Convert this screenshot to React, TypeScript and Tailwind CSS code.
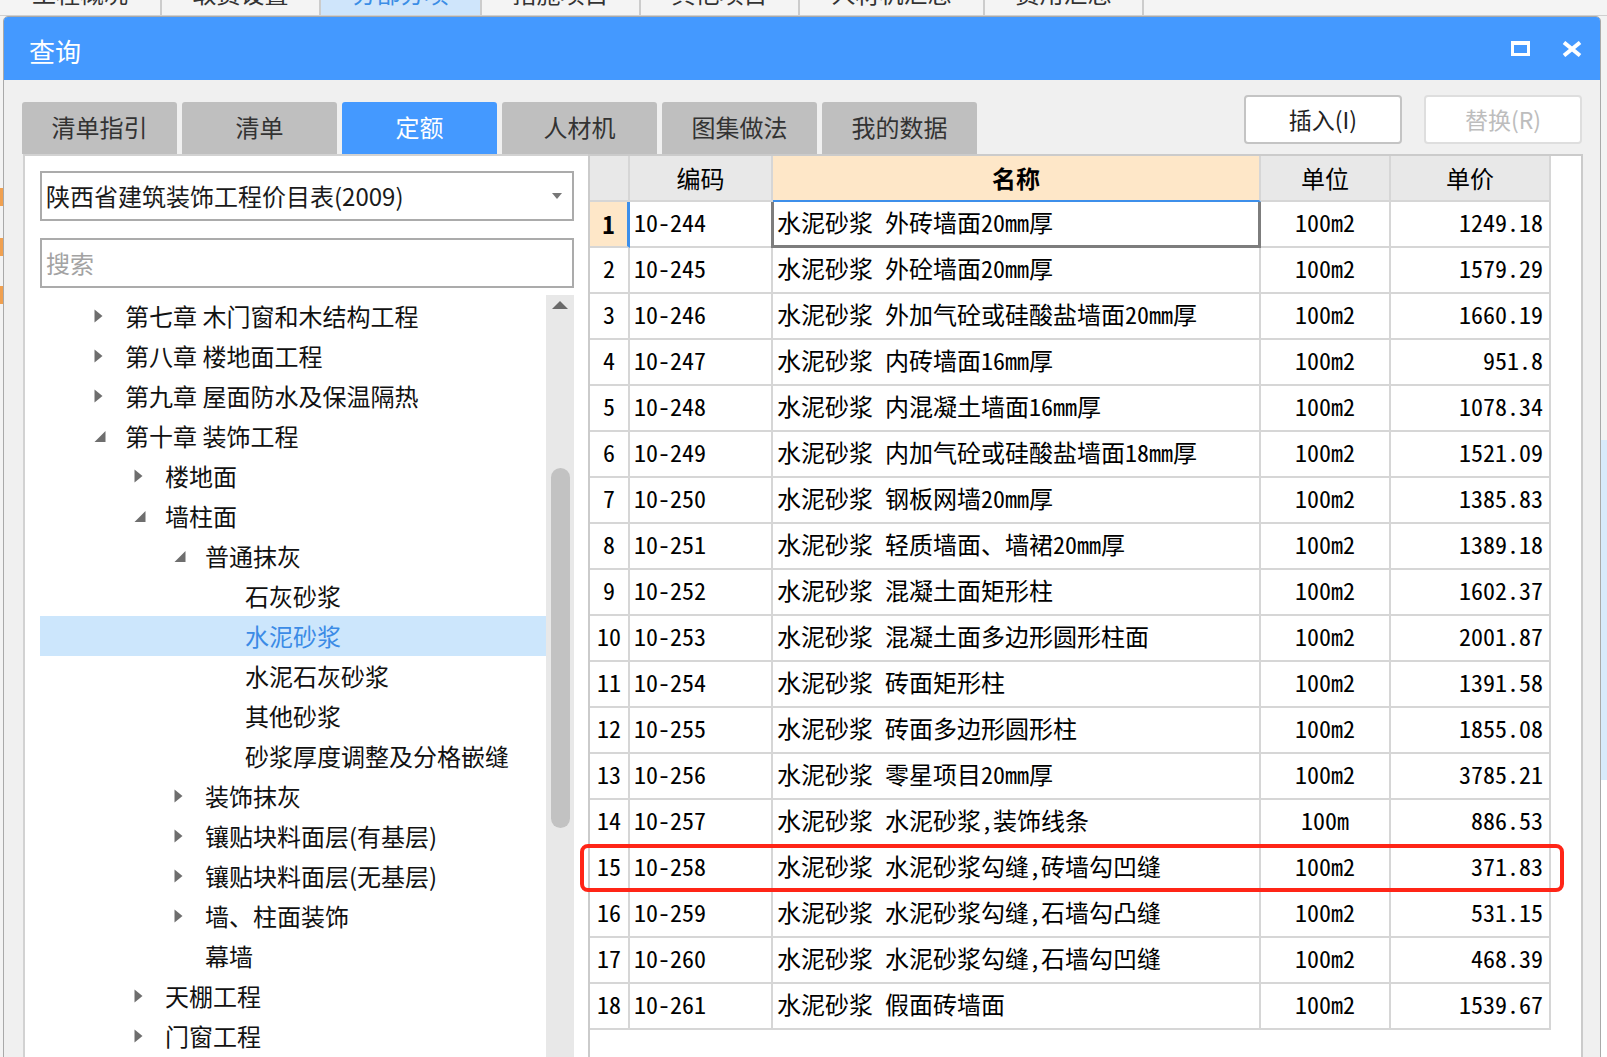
import React from 'react';

type TreeItem = { level: number; arrow: 'r' | 'd' | ''; text: string; selected?: boolean };

const treeItems: TreeItem[] = [
  { level: 0, arrow: 'r', text: '第七章 木门窗和木结构工程' },
  { level: 0, arrow: 'r', text: '第八章 楼地面工程' },
  { level: 0, arrow: 'r', text: '第九章 屋面防水及保温隔热' },
  { level: 0, arrow: 'd', text: '第十章 装饰工程' },
  { level: 1, arrow: 'r', text: '楼地面' },
  { level: 1, arrow: 'd', text: '墙柱面' },
  { level: 2, arrow: 'd', text: '普通抹灰' },
  { level: 3, arrow: '', text: '石灰砂浆' },
  { level: 3, arrow: '', text: '水泥砂浆', selected: true },
  { level: 3, arrow: '', text: '水泥石灰砂浆' },
  { level: 3, arrow: '', text: '其他砂浆' },
  { level: 3, arrow: '', text: '砂浆厚度调整及分格嵌缝' },
  { level: 2, arrow: 'r', text: '装饰抹灰' },
  { level: 2, arrow: 'r', text: '镶贴块料面层(有基层)' },
  { level: 2, arrow: 'r', text: '镶贴块料面层(无基层)' },
  { level: 2, arrow: 'r', text: '墙、柱面装饰' },
  { level: 2, arrow: '', text: '幕墙' },
  { level: 1, arrow: 'r', text: '天棚工程' },
  { level: 1, arrow: 'r', text: '门窗工程' },
];

const indent = ['pl-[54px]', 'pl-[94px]', 'pl-[134px]', 'pl-[174px]'];

const rows: [string, string, string, string][] = [
  ['10-244', '水泥砂浆 外砖墙面20mm厚', '100m2', '1249.18'],
  ['10-245', '水泥砂浆 外砼墙面20mm厚', '100m2', '1579.29'],
  ['10-246', '水泥砂浆 外加气砼或硅酸盐墙面20mm厚', '100m2', '1660.19'],
  ['10-247', '水泥砂浆 内砖墙面16mm厚', '100m2', '951.8'],
  ['10-248', '水泥砂浆 内混凝土墙面16mm厚', '100m2', '1078.34'],
  ['10-249', '水泥砂浆 内加气砼或硅酸盐墙面18mm厚', '100m2', '1521.09'],
  ['10-250', '水泥砂浆 钢板网墙20mm厚', '100m2', '1385.83'],
  ['10-251', '水泥砂浆 轻质墙面、墙裙20mm厚', '100m2', '1389.18'],
  ['10-252', '水泥砂浆 混凝土面矩形柱', '100m2', '1602.37'],
  ['10-253', '水泥砂浆 混凝土面多边形圆形柱面', '100m2', '2001.87'],
  ['10-254', '水泥砂浆 砖面矩形柱', '100m2', '1391.58'],
  ['10-255', '水泥砂浆 砖面多边形圆形柱', '100m2', '1855.08'],
  ['10-256', '水泥砂浆 零星项目20mm厚', '100m2', '3785.21'],
  ['10-257', '水泥砂浆 水泥砂浆,装饰线条', '100m', '886.53'],
  ['10-258', '水泥砂浆 水泥砂浆勾缝,砖墙勾凹缝', '100m2', '371.83'],
  ['10-259', '水泥砂浆 水泥砂浆勾缝,石墙勾凸缝', '100m2', '531.15'],
  ['10-260', '水泥砂浆 水泥砂浆勾缝,石墙勾凹缝', '100m2', '468.39'],
  ['10-261', '水泥砂浆 假面砖墙面', '100m2', '1539.67'],
];

const topTabs = [
  { label: '工程概况', w: 'w-[162px]', active: false },
  { label: '取费设置', w: 'w-[159px]', active: false },
  { label: '分部分项', w: 'w-[161px]', active: true },
  { label: '措施项目', w: 'w-[159px]', active: false },
  { label: '其他项目', w: 'w-[159px]', active: false },
  { label: '人材机汇总', w: 'w-[185px]', active: false },
  { label: '费用汇总', w: 'w-[159px]', active: false },
];

const dlgTabs = ['清单指引', '清单', '定额', '人材机', '图集做法', '我的数据'];

function Arrow({ kind }: { kind: 'r' | 'd' | '' }) {
  if (kind === 'r')
    return (
      <svg width="12" height="14" viewBox="0 0 12 14" className="shrink-0">
        <polygon points="0.5,0.5 8.5,7 0.5,13.5" fill="#6e6e6e" />
      </svg>
    );
  if (kind === 'd')
    return (
      <svg width="12" height="14" viewBox="0 0 12 14" className="shrink-0">
        <polygon points="11.5,2 11.5,13 0.5,13" fill="#6e6e6e" />
      </svg>
    );
  return <div className="w-[12px] shrink-0" />;
}

const cell = 'border-r-2 border-b-2 border-[#d6d6d6] flex items-center';
const mono = "font-['Noto_Sans_Mono_CJK_SC','Noto_Sans_CJK_SC',monospace]";

export default function App() {
  return (
    <div className="relative w-[1607px] h-[1057px] overflow-hidden bg-[#f3f3f3] font-['Noto_Sans_CJK_SC',sans-serif] text-[#111]">
      {/* background app tab strip */}
      <div className="flex h-[16px] border-b border-[#cfcfcf] bg-[#f4f4f4]">
        {topTabs.map((t) => (
          <div
            key={t.label}
            className={`${t.w} h-[15px] overflow-hidden border-r-2 border-[#cccccc] flex justify-center ${t.active ? 'bg-[#cfe5fb]' : ''}`}
          >
            <span className={`text-[24px] leading-[24px] mt-[-19px] ${t.active ? 'text-[#3b8de6]' : 'text-[#333]'}`}>{t.label}</span>
          </div>
        ))}
      </div>

      {/* left edge bits of background app */}
      <div className="absolute left-0 top-[188px] w-[3px] h-[18px] bg-[#f0a050]" />
      <div className="absolute left-0 top-[238px] w-[3px] h-[18px] bg-[#f0a050]" />
      <div className="absolute left-0 top-[286px] w-[3px] h-[18px] bg-[#f0a050]" />
      {/* right edge bits of background app */}
      <div className="absolute right-0 top-[440px] w-[6px] h-[340px] bg-[#d8eafb]" />
      <div className="absolute right-0 top-[780px] w-[6px] h-[277px] bg-white" />

      {/* dialog window */}
      <div className="absolute left-[3px] top-[16px] w-[1598px] h-[1070px] bg-[#f0f0f0] border border-[#a9a9a9] rounded-t-[5px] overflow-hidden flex flex-col">
        {/* title bar */}
        <div className="h-[63px] shrink-0 bg-[#4499ff] flex items-center pl-[25px] pr-[18px]">
          <span className="text-[26px] leading-none text-white mt-[4px]">查询</span>
          <div className="ml-auto flex items-center">
            <div className="w-[19px] h-[15px] border-[3px] border-t-[4px] border-white" />
            <svg width="20" height="16" viewBox="0 0 20 16" className="ml-[32px]">
              <line x1="2" y1="1.5" x2="18" y2="14.5" stroke="white" strokeWidth="4" />
              <line x1="18" y1="1.5" x2="2" y2="14.5" stroke="white" strokeWidth="4" />
            </svg>
          </div>
        </div>

        {/* tabs + buttons */}
        <div className="h-[74px] shrink-0 flex items-start">
          <div className="ml-[18px] mt-[22px] flex gap-[5px]">
            {dlgTabs.map((t) => (
              <div
                key={t}
                className={`w-[155px] h-[52px] rounded-t-[3px] flex items-center justify-center text-[24px] leading-none pb-[2px] ${t === '定额' ? 'bg-[#4499ff] text-white' : 'bg-[#bfbfbf] text-[#333]'}`}
              >
                {t}
              </div>
            ))}
          </div>
          <div className="ml-auto mt-[15px] mr-[18px] flex gap-[22px]">
            <div className="w-[158px] h-[49px] bg-white border-2 border-[#c4c4c4] rounded-[4px] flex items-center justify-center text-[23px] leading-none text-[#222]">
              插入(I)
            </div>
            <div className="w-[158px] h-[49px] bg-white border-2 border-[#dedede] rounded-[4px] flex items-center justify-center text-[23px] leading-none text-[#bdbdbd]">
              替换(R)
            </div>
          </div>
        </div>

        {/* panels */}
        <div className="flex-1 flex ml-[19px] mr-[17px]">
          {/* left panel */}
          <div className="w-[565px] bg-white border-l-2 border-t-2 border-[#d2d2d2] flex flex-col pl-[15px]">
            <div className="mt-[15px] w-[534px] h-[50px] border-2 border-[#ababab] flex items-center pl-[4px] pr-[10px]">
              <span className="text-[24px] leading-none text-[#1a1a1a]">陕西省建筑装饰工程价目表(2009)</span>
              <svg width="10" height="6" viewBox="0 0 10 6" className="ml-auto">
                <polygon points="0,0 10,0 5,6" fill="#777" />
              </svg>
            </div>
            <div className="mt-[17px] w-[534px] h-[50px] border-2 border-[#ababab] flex items-center pl-[4px]">
              <span className="text-[24px] leading-none text-[#a3a3a3]">搜索</span>
            </div>
            <div className="mt-[7px] flex flex-1">
              <div className="w-[506px] pt-[1px] flex flex-col">
                {treeItems.map((it, i) => (
                  <div
                    key={i}
                    className={`h-[40px] shrink-0 flex items-center ${indent[it.level]} ${it.selected ? 'bg-[#cce6fc] text-[#3b8be6]' : ''}`}
                  >
                    <Arrow kind={it.arrow} />
                    <span className="ml-[19px] text-[24px] leading-none whitespace-nowrap">{it.text}</span>
                  </div>
                ))}
              </div>
              <div className="w-[28px] bg-[#e8e8e8] flex flex-col items-center">
                <svg width="16" height="8" viewBox="0 0 16 8" className="mt-[6px]">
                  <polygon points="8,0 16,8 0,8" fill="#6a6a6a" />
                </svg>
                <div className="mt-[159px] w-[19px] h-[360px] rounded-full bg-[#c2c2c2]" />
              </div>
            </div>
          </div>

          {/* right panel: table */}
          <div className="flex-1 bg-white border-2 border-b-0 border-[#cbcbcb] flex flex-col">
            <div className={`w-[961px] flex flex-col ${mono} text-[24px] leading-none text-black`}>
              <div className="grid grid-cols-[40px_143px_488px_130px_160px] h-[46px]">
                <div className={`${cell} bg-[#e8e8e8]`} />
                <div className={`${cell} bg-[#e8e8e8] justify-center`}>编码</div>
                <div className={`${cell} bg-[#fee7c8] justify-center font-bold border-b-[#3d8fea]`}>名称</div>
                <div className={`${cell} bg-[#e8e8e8] justify-center`}>单位</div>
                <div className={`${cell} bg-[#e8e8e8] justify-center`}>单价</div>
              </div>
              {rows.map((r, i) => (
                <div key={r[0]} className="grid grid-cols-[40px_143px_488px_130px_160px] h-[46px]">
                  <div
                    className={`${cell} justify-center pb-[5px] ${i === 0 ? 'bg-[#fee7c8] font-bold border-r-[3px] border-r-[#3d8fea] pt-[4px] pb-0' : ''}`}
                  >
                    {i + 1}
                  </div>
                  <div className={`${cell} pl-[4px] pb-[5px]`}>{r[0]}</div>
                  <div className={`${cell} pl-[4px] pb-[5px] relative whitespace-nowrap`}>
                    {r[1]}
                    {i === 0 && (
                      <div className="absolute -left-[2px] top-0 -right-[2px] -bottom-[2px] border-[3px] border-t-0 border-[#7d7d7d]" />
                    )}
                  </div>
                  <div className={`${cell} justify-center pb-[5px]`}>{r[2]}</div>
                  <div className={`${cell} justify-end pr-[6px] pb-[5px]`}>{r[3]}</div>
                </div>
              ))}
            </div>
          </div>
        </div>
      </div>

      {/* annotation box */}
      <div className="absolute left-[580px] top-[844px] w-[984px] h-[48px] border-4 border-[#ff2517] rounded-[8px]" />
    </div>
  );
}
